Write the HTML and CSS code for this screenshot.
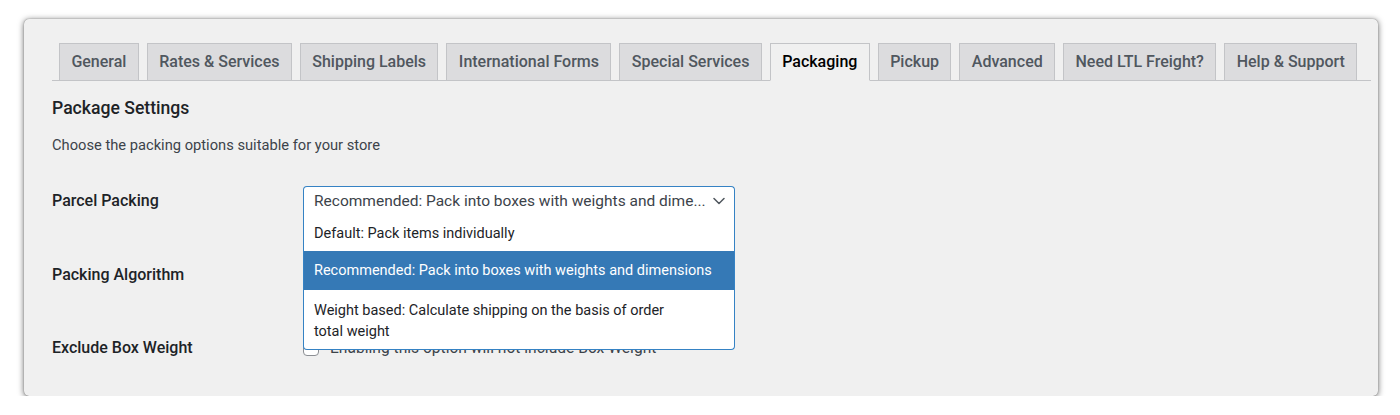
FILE: index.html
```html
<!DOCTYPE html>
<html lang="en">
<head>
<meta charset="utf-8">
<title>Packaging</title>
<link rel="stylesheet" href="styles.css">
</head>
<body>
<div class="card">
  <nav class="tabs">
    <a class="tab">General</a>
    <a class="tab">Rates &amp; Services</a>
    <a class="tab">Shipping Labels</a>
    <a class="tab">International Forms</a>
    <a class="tab">Special Services</a>
    <a class="tab active">Packaging</a>
    <a class="tab">Pickup</a>
    <a class="tab">Advanced</a>
    <a class="tab">Need LTL Freight?</a>
    <a class="tab">Help &amp; Support</a>
  </nav>
  <h2 class="heading">Package Settings</h2>
  <p class="desc">Choose the packing options suitable for your store</p>
  <div class="form">
    <div class="row">
      <div class="label">Parcel Packing</div>
      <div class="field">
        <div class="select">
          <span class="select-value">Recommended: Pack into boxes with weights and dime...</span>
          <svg class="chevron" width="12" height="8" viewBox="0 0 12 8"><path d="M1 1.5 L6 6.5 L11 1.5" fill="none" stroke="#50575e" stroke-width="1.5" stroke-linecap="round" stroke-linejoin="round"/></svg>
          <ul class="select-list">
            <li class="option">Default: Pack items individually</li>
            <li class="option selected">Recommended: Pack into boxes with weights and dimensions</li>
            <li class="option tall">Weight based: Calculate shipping on the basis of order<br>total weight</li>
          </ul>
        </div>
      </div>
    </div>
    <div class="row">
      <div class="label">Packing Algorithm</div>
      <div class="field"></div>
    </div>
    <div class="row">
      <div class="label">Exclude Box Weight</div>
      <div class="field check">
        <span class="checkbox"></span>
        <span class="check-text">Enabling this option will not include Box Weight</span>
      </div>
    </div>
  </div>
</div>
</body>
</html>
```

FILE: styles.css
```css
* { box-sizing: border-box; }

html, body {
  margin: 0;
  padding: 0;
  background: #ffffff;
}

body {
  font-family: Roboto, "Noto Sans", "Liberation Sans", sans-serif;
  color: #1d2327;
}

.card {
  margin: 19px 22px 0 24px;
  height: 377px;
  background: #f0f0f0;
  border-radius: 5px;
  box-shadow: 0 1px 6px rgba(0, 0, 0, 0.6), 0 0 1px rgba(0, 0, 0, 0.5);
  padding: 23px 7px 0 28px;
}

.tabs {
  display: flex;
  align-items: flex-end;
  border-bottom: 1px solid #c3c4c7;
  height: 39px;
  padding-left: 7px;
}

.tab {
  display: block;
  height: 38px;
  margin-right: 8px;
  margin-bottom: -1px;
  padding: 0 11.4px;
  border: 1px solid #c3c4c7;
  border-bottom: 1px solid #c3c4c7;
  background: #dcdcde;
  color: #50575e;
  font-size: 16px;
  font-weight: 500;
  line-height: 36px;
  white-space: nowrap;
}

.tab.active {
  background: #f0f0f0;
  border-bottom-color: #f0f0f0;
  color: #000000;
}

.heading {
  margin: 15px 0 0;
  font-size: 17.6px;
  font-weight: 500;
  line-height: 24px;
  color: #1d2327;
}

.desc {
  margin: 15px 0 0;
  font-size: 14.7px;
  line-height: 20px;
  color: #3c434a;
}

.form {
  margin-top: 9px;
  display: flex;
  flex-direction: column;
}

.row {
  display: flex;
  align-items: center;
  height: 73.5px;
}

.label {
  width: 251px;
  flex: none;
  font-size: 16px;
  font-weight: 500;
  color: #1d2327;
}

.field {
  flex: 1;
}

.select {
  position: relative;
  width: 432px;
  height: 30px;
  background: #ffffff;
  border: 1px solid #3582c4;
  border-bottom: none;
  border-radius: 4px 4px 0 0;
  display: flex;
  align-items: center;
  padding: 0 9px 0 10px;
  z-index: 2;
}

.select-value {
  flex: 1;
  font-size: 15.5px;
  color: #3c434a;
  white-space: nowrap;
  overflow: hidden;
}

.chevron {
  flex: none;
  margin-left: 4px;
}

.select-list {
  position: absolute;
  top: 100%;
  left: -1px;
  right: -1px;
  margin: 0;
  padding: 0;
  list-style: none;
  background: #ffffff;
  border: 1px solid #3582c4;
  border-top: none;
  border-radius: 0 0 4px 4px;
}

.option {
  padding: 7px 10px 7.5px;
  font-size: 14.5px;
  line-height: 21px;
  color: #1d2327;
}

.option.selected {
  padding: 9px 10px;
  background: #3579b6;
  color: #ffffff;
}

.option.tall {
  padding: 9.5px 10px 7.5px;
}

.check {
  display: flex;
  align-items: center;
  gap: 11px;
}

.checkbox {
  width: 16px;
  height: 16px;
  border: 1px solid #8c8f94;
  border-radius: 4px;
  background: #ffffff;
  flex: none;
}

.check-text {
  font-size: 15.6px;
  color: #3c434a;
}
```
